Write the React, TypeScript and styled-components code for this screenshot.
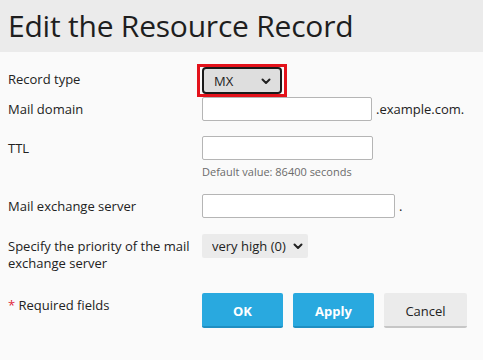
import React from "react";
import styled, { createGlobalStyle } from "styled-components";

const Global = createGlobalStyle`
  html, body { margin: 0; padding: 0; background: #fafafa; }
  body { font-family: "Open Sans", "Liberation Sans", sans-serif; color: #222; }
  * { box-sizing: border-box; }
`;

const Page = styled.div`
  width: 483px;
  height: 360px;
  background: #fafafa;
  overflow: hidden;
`;

const Header = styled.header`
  height: 52px;
  background: #ebebeb;
  padding: 0 8px;
  display: flex;
  align-items: center;
`;

const Title = styled.h1`
  margin: 0;
  font-size: 30px;
  font-weight: 400;
  line-height: 40px;
  letter-spacing: -0.22px;
  color: #1e1e1e;
`;

const Form = styled.form`
  padding: 0 8px;
`;

const Row = styled.div<{ $mt: number }>`
  display: flex;
  align-items: flex-start;
  margin-top: ${(p) => p.$mt}px;
`;

const Label = styled.label<{ $pt?: number; $lh?: number }>`
  width: 186px;
  flex: none;
  margin-right: 8px;
  padding-top: ${(p) => p.$pt ?? 3}px;
  font-size: 13px;
  line-height: ${(p) => p.$lh ?? 18}px;
  color: #222;
`;

const Field = styled.div`
  display: flex;
  flex-direction: column;
`;

const Inline = styled.div`
  display: flex;
  align-items: center;
`;

const TextInput = styled.input<{ $w: number }>`
  width: ${(p) => p.$w}px;
  height: 24px;
  border: 1px solid #b5b5b5;
  border-radius: 2px;
  background: #fff;
  font-family: inherit;
  font-size: 13px;
  padding: 0 6px;
  margin: 0;
`;

const Suffix = styled.span`
  font-size: 13px;
  line-height: 18px;
  color: #222;
  margin-left: 4px;
`;

const Hint = styled.div`
  margin-top: 4px;
  font-size: 11px;
  line-height: 16px;
  color: #6b6b6b;
`;

const FocusRing = styled.span`
  display: inline-flex;
  align-items: center;
  margin-left: -5px;
  padding: 0 2px;
  border: 3px solid #e3121b;
`;

const SelectWrap = styled.span`
  position: relative;
  display: inline-flex;
`;

const Select = styled.select<{ $w: number; $focused?: boolean }>`
  appearance: none;
  -webkit-appearance: none;
  width: ${(p) => p.$w}px;
  height: ${(p) => (p.$focused ? 27 : 24)}px;
  margin: 0;
  font-family: inherit;
  font-size: 13px;
  color: #222;
  background: ${(p) => (p.$focused ? "#dedede" : "#ebebeb")};
  border: ${(p) => (p.$focused ? "2px solid #1a1a1a" : "none")};
  border-radius: ${(p) => (p.$focused ? 4 : 2)}px;
  padding: 0 0 0 10px;
  outline: none;
`;

const Chevron = styled.svg<{ $right: number }>`
  position: absolute;
  right: ${(p) => p.$right}px;
  top: 50%;
  width: 10px;
  height: 7px;
  margin-top: -3px;
  pointer-events: none;
`;

const Required = styled.span`
  color: #e0263a;
`;

const Buttons = styled.div`
  display: flex;
  gap: 10px;
`;

const Button = styled.button<{ $primary?: boolean; $w: number }>`
  width: ${(p) => p.$w}px;
  height: 35px;
  margin: 0;
  font-family: inherit;
  font-size: 13px;
  font-weight: ${(p) => (p.$primary ? 700 : 400)};
  color: ${(p) => (p.$primary ? "#fff" : "#222")};
  background: ${(p) => (p.$primary ? "#29a9df" : "#ebebeb")};
  border: none;
  border-bottom: 2px solid ${(p) => (p.$primary ? "#1f8fc2" : "#c6c6c6")};
  border-radius: 2px;
  padding: 2px 0 0;
  cursor: pointer;
`;

const ChevronIcon = ({ right }: { right: number }) => (
  <Chevron $right={right} viewBox="0 0 10 7">
    <path d="M1.5 1.5 L5 5 L8.5 1.5" fill="none" stroke="#222" strokeWidth="2" strokeLinecap="round" strokeLinejoin="round" />
  </Chevron>
);

export default function App() {
  return (
    <Page>
      <Global />
      <Header>
        <Title>Edit the Resource Record</Title>
      </Header>
      <Form onSubmit={(e) => e.preventDefault()}>
        <Row $mt={12}>
          <Label $pt={6}>Record type</Label>
          <FocusRing>
            <SelectWrap>
              <Select $w={80} $focused defaultValue="MX">
                <option>MX</option>
              </Select>
              <ChevronIcon right={11} />
            </SelectWrap>
          </FocusRing>
        </Row>
        <Row $mt={0}>
          <Label>Mail domain</Label>
          <Inline>
            <TextInput $w={170} />
            <Suffix>.example.com.</Suffix>
          </Inline>
        </Row>
        <Row $mt={15}>
          <Label>TTL</Label>
          <Field>
            <TextInput $w={171} />
            <Hint>Default value: 86400 seconds</Hint>
          </Field>
        </Row>
        <Row $mt={14}>
          <Label>Mail exchange server</Label>
          <Inline>
            <TextInput $w={193} />
            <Suffix>.</Suffix>
          </Inline>
        </Row>
        <Row $mt={16}>
          <Label $pt={4} $lh={17}>Specify the priority of the mail exchange server</Label>
          <SelectWrap>
            <Select $w={106} defaultValue="0">
              <option value="0">very high (0)</option>
            </Select>
            <ChevronIcon right={5} />
          </SelectWrap>
        </Row>
        <Row $mt={21}>
          <Label>
            <Required>*</Required> Required fields
          </Label>
          <Buttons>
            <Button type="button" $primary $w={81}>OK</Button>
            <Button type="button" $primary $w={81}>Apply</Button>
            <Button type="button" $w={83}>Cancel</Button>
          </Buttons>
        </Row>
      </Form>
    </Page>
  );
}
